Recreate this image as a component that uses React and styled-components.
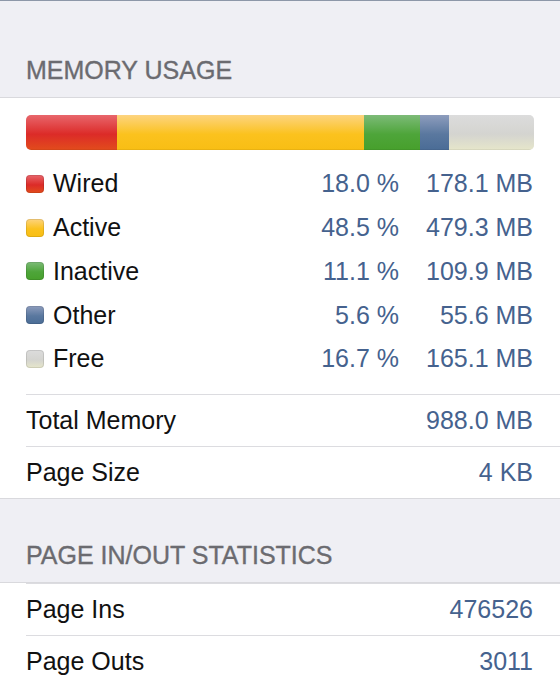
import React from "react";
import styled, { createGlobalStyle } from "styled-components";

const segments = [
  { name: "Wired", pct: 18.0, mb: "178.1 MB", top: "#e8666c", mid: "#dc2b28", bottom: "#e24c1c" },
  { name: "Active", pct: 48.5, mb: "479.3 MB", top: "#fdd480", mid: "#fbc21e", bottom: "#f8be14" },
  { name: "Inactive", pct: 11.1, mb: "109.9 MB", top: "#7dbb78", mid: "#4ea53a", bottom: "#47a02c" },
  { name: "Other", pct: 5.6, mb: "55.6 MB", top: "#8e9dbd", mid: "#5a789f", bottom: "#4a6c96" },
  { name: "Free", pct: 16.8, mb: "165.1 MB", top: "#dcdcdc", mid: "#d4d4d0", bottom: "#e6e6ca", label: "16.7 %" },
];

const GlobalStyle = createGlobalStyle`
  body {
    margin: 0;
    background: #efeff4;
    font-family: "Liberation Sans", Arial, sans-serif;
  }
`;

export default function App() {
  return (
    <>
      <GlobalStyle />
      <Page>
        <SectionHeader $height={97}>MEMORY USAGE</SectionHeader>
        <Group>
          <BarWrap>
            <Bar>
              {segments.map((s) => (
                <Segment key={s.name} $s={s} style={{ width: `${s.pct}%` }} />
              ))}
            </Bar>
          </BarWrap>
          <Legend>
            {segments.map((s) => (
              <LegendRow key={s.name}>
                <Swatch $s={s} />
                <LegendLabel>{s.name}</LegendLabel>
                <Value>{s.label || `${s.pct.toFixed(1)} %`}</Value>
                <Value>{s.mb}</Value>
              </LegendRow>
            ))}
          </Legend>
          <Row>
            <Label>Total Memory</Label>
            <Value>988.0 MB</Value>
          </Row>
          <Row>
            <Label>Page Size</Label>
            <Value>4 KB</Value>
          </Row>
        </Group>

        <SectionHeader $height={84}>PAGE IN/OUT STATISTICS</SectionHeader>
        <Group>
          <Row>
            <Label>Page Ins</Label>
            <Value>476526</Value>
          </Row>
          <Row>
            <Label>Page Outs</Label>
            <Value>3011</Value>
          </Row>
        </Group>
      </Page>
    </>
  );
}

const Page = styled.div`
  width: 560px;
  min-height: 683px;
  background: #efeff4;
  border-top: 1px solid #8d97a8;
  overflow: hidden;
`;

const SectionHeader = styled.div`
  height: ${({ $height }) => $height}px;
  box-sizing: border-box;
  display: flex;
  align-items: flex-end;
  padding: 0 26px 12px;
  font-size: 25px;
  color: #6b6b70;
  -webkit-text-stroke: 0.35px #6b6b70;
  border-bottom: 1px solid #d9d9dd;
`;

const Group = styled.div`
  background: #ffffff;
  padding-left: 26px;
  border-bottom: 1px solid #d9d9dd;
`;

const BarWrap = styled.div`
  padding: 17px 26px 12px 0;
`;

const Bar = styled.div`
  display: flex;
  height: 35px;
  border-radius: 5px;
  overflow: hidden;
  box-shadow: inset 0 0 0 1px rgba(0, 0, 0, 0.08);
`;

const Segment = styled.div`
  height: 100%;
  background: linear-gradient(
    to bottom,
    ${({ $s }) => $s.top} 0%,
    ${({ $s }) => $s.mid} 55%,
    ${({ $s }) => $s.bottom} 100%
  );
  box-shadow: inset 0 -1px 0 rgba(0, 0, 0, 0.06);
`;

const Legend = styled.div`
  padding-bottom: 13px;
`;

const LegendRow = styled.div`
  display: grid;
  grid-template-columns: 18px 1fr auto 134px;
  align-items: center;
  height: 43.75px;
  padding-right: 27px;
`;

const Swatch = styled.div`
  width: 18px;
  height: 18px;
  border-radius: 4px;
  background: linear-gradient(
    to bottom,
    ${({ $s }) => $s.top} 0%,
    ${({ $s }) => $s.mid} 55%,
    ${({ $s }) => $s.bottom} 100%
  );
  box-shadow: inset 0 0 0 1px rgba(0, 0, 0, 0.1);
`;

const LegendLabel = styled.span`
  font-size: 25px;
  color: #111;
  margin-left: 9px;
`;

const Value = styled.span`
  font-size: 25px;
  color: #45628e;
  text-align: right;
`;

const Row = styled.div`
  display: flex;
  align-items: center;
  justify-content: space-between;
  height: 51px;
  padding-right: 27px;
  border-top: 1px solid #dcdce0;
`;

const Label = styled.span`
  font-size: 25px;
  color: #111;
`;
